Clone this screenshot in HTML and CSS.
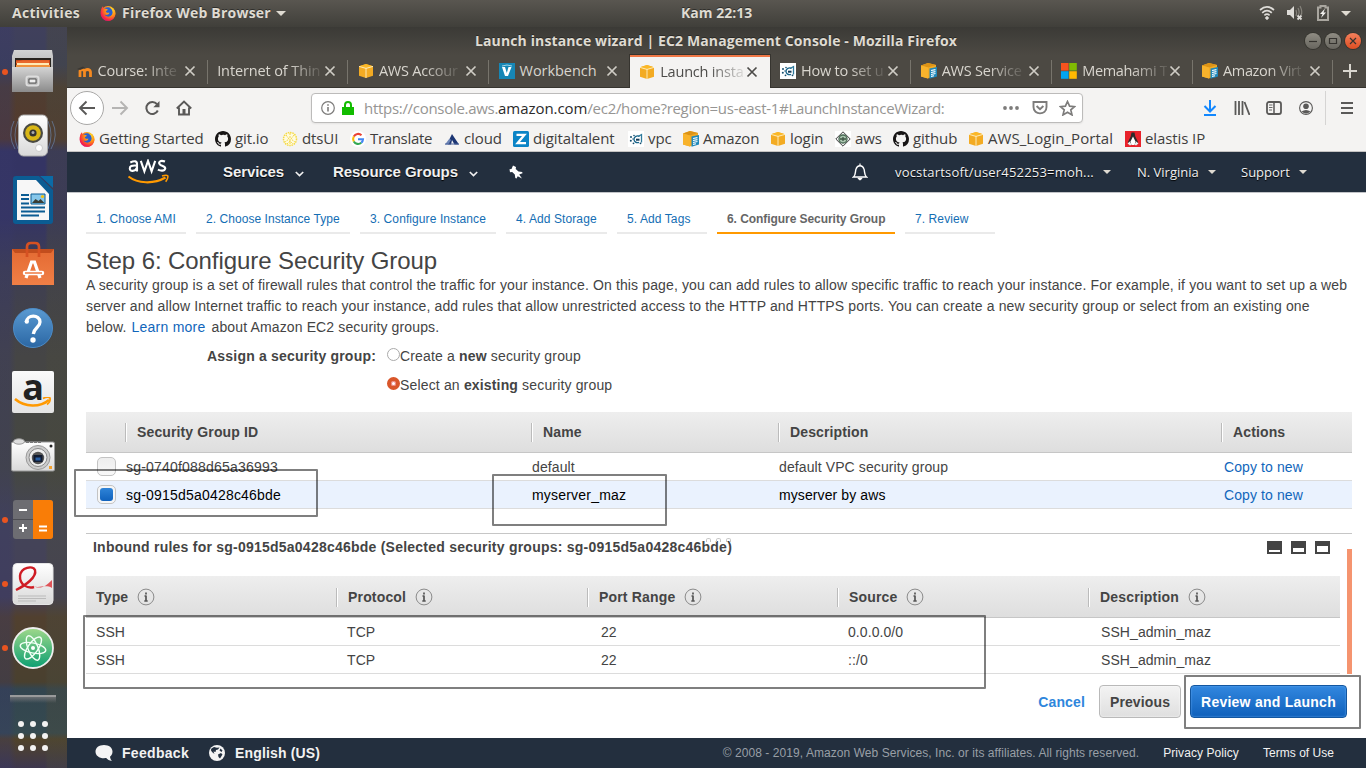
FILE: index.html
```
<!DOCTYPE html>
<html lang="en">
<head>
<meta charset="utf-8">
<title>Launch instance wizard | EC2 Management Console</title>
<link rel="stylesheet" href="styles.css">
</head>
<body>
<svg class="defs" width="0" height="0">
  <defs>
    <radialGradient id="gFox" cx=".7" cy=".25" r=".9"><stop offset="0" stop-color="#ffe226"/><stop offset=".45" stop-color="#ff8a16"/><stop offset=".8" stop-color="#f5224a"/><stop offset="1" stop-color="#d01582"/></radialGradient>
    <linearGradient id="gMetal" x1="0" y1="0" x2="0" y2="1"><stop offset="0" stop-color="#d4d4d4"/><stop offset="1" stop-color="#8b8b8b"/></linearGradient>
    <linearGradient id="gWhite" x1="0" y1="0" x2="0" y2="1"><stop offset="0" stop-color="#fff"/><stop offset="1" stop-color="#d9d9d9"/></linearGradient>
    <linearGradient id="gBag" x1="0" y1="0" x2="0" y2="1"><stop offset="0" stop-color="#e46a32"/><stop offset="1" stop-color="#f07f46"/></linearGradient>
    <linearGradient id="gHelp" x1="0" y1="0" x2="0" y2="1"><stop offset="0" stop-color="#5a9ad2"/><stop offset="1" stop-color="#2b67a4"/></linearGradient>
    <linearGradient id="gAtom" x1="0" y1="0" x2="0" y2="1"><stop offset="0" stop-color="#9fd88a"/><stop offset="1" stop-color="#0c9f72"/></linearGradient>
  </defs>
  <symbol id="fox" viewBox="0 0 16 16"><circle cx="8" cy="8.400" r="7.400" fill="url(#gFox)"/><path d="M3.200 6C4 2.500 6.500 1.800 9 2.300c3 1 4.300 4 3.600 6.700-1.200 3-5.800 4-8.200 1.500z" fill="#2a5fd0"/><path d="M.8 7C.7 4 2 2 3 1.300c0 1 .3 1.700 1 2.200 1-.3 2 0 2.500.5C8 4 8 5 7 5.500c-1 .3-1.500.9-1 1.500.8.900 2.400 1 3.500.7-.8 2-3 2.700-5 1.900 2.300 3.500 8 2.500 8.300-2.100 0-2.500-1.500-4-3-4.700C12.500 1.600 15.600 5 15.400 9 15 13 12 15.800 8 15.800S.9 12 .8 7z" fill="url(#gFox)"/></symbol>
  <symbol id="cube" viewBox="0 0 16 16"><path d="M1 3.200 8 1l7 2.200v9.600L8 15l-7-2.200z" fill="#f3ab23"/><path d="M1 3.200 8 1l7 2.200-7 2z" fill="#fbb827"/><path d="M8 5.200v9.800M1 3.400l7 2 7-2" stroke="#fff0c5" stroke-width=".9" fill="none"/></symbol>
  <symbol id="cubedoc" viewBox="0 0 16 16"><path d="M0 2.500 7 0l8 2v10l-8 3.500-7-2z" fill="#f2aa25"/><path d="M0 2.500 7 0l8 2-8 2.500z" fill="#dc9316"/><path d="M7 4.500v11L0 13.500v-11z" fill="#f8b32c"/><path d="M8.500 5.500 16 4v9.500l-7.500 2.200z" fill="#1e88bb"/><path d="M10 7.500l4.500-.9M10 9.500l4.500-.9M10 11.500l4.500-1M10 13.400l3-.7" stroke="#fff" stroke-width="1.100"/></symbol>
  <symbol id="vpc" viewBox="0 0 16 16"><path d="M0 0h16v16H0z" fill="#fff"/><path d="M11.500 5.500C9 4 6 5.800 6 8.300s2.500 4 5 3" fill="none" stroke="#17648a" stroke-width="1.300"/><path d="M10 5.500 13.500 3.500v8" fill="none" stroke="#2f7a9c" stroke-width="1.300"/><path d="M8 8.700h3.500" stroke="#123a58" stroke-width="2"/><g fill="#174f70"><circle cx="3" cy="6" r="1"/><circle cx="2.800" cy="9.800" r="1"/><circle cx="5" cy="8" r=".7"/><circle cx="5.500" cy="12.300" r=".9"/><circle cx="12.500" cy="12.300" r=".9"/><circle cx="6" cy="4.500" r=".8"/></g></symbol>
  <symbol id="github" viewBox="0 0 16 16"><path fill="#171515" d="M8 0C3.580 0 0 3.580 0 8c0 3.540 2.290 6.530 5.470 7.590.4.070.55-.17.55-.38 0-.19-.01-.82-.01-1.490-2.010.37-2.530-.49-2.690-.94-.09-.23-.48-.94-.82-1.130-.28-.15-.68-.52-.01-.53.63-.01 1.080.58 1.230.82.72 1.210 1.870.87 2.330.66.07-.52.28-.87.51-1.070-1.780-.2-3.640-.89-3.640-3.950 0-.87.31-1.590.82-2.150-.08-.2-.36-1.020.08-2.120 0 0 .67-.21 2.200.82A7.600 7.600 0 0 1 8 3.860c.68 0 1.360.09 2 .27 1.530-1.040 2.200-.82 2.200-.82.44 1.100.16 1.920.08 2.120.51.56.82 1.270.82 2.150 0 3.070-1.870 3.750-3.650 3.950.29.25.54.73.54 1.480 0 1.070-.01 1.930-.01 2.200 0 .21.15.46.55.38A8.010 8.010 0 0 0 16 8c0-4.420-3.580-8-8-8z"/></symbol>
  <symbol id="x" viewBox="0 0 12 12"><path d="M1.500 1.500l9 9M10.500 1.500l-9 9" stroke="currentColor" stroke-width="1.700" fill="none"/></symbol>
  <symbol id="info" viewBox="0 0 18 18"><circle cx="9" cy="9" r="7.900" fill="none" stroke="#8b8b8b" stroke-width="1"/><path d="M9 7.400v6M9 4.500v1.900M7.500 8h1.500M7.300 13h3.400" stroke="#555" stroke-width="1.700"/></symbol>
</svg>

<header class="topbar">
  <span class="activities">Activities</span>
  <svg class="i16"><use href="#fox"/></svg>
  <span class="appname">Firefox Web Browser</span><i class="tri"></i>
  <span class="clock">Kam 22:13</span>
  <div class="tray">
    <svg width="16" height="16" viewBox="0 0 16 16" fill="none" stroke="#dedcd8" stroke-width="1.700"><path d="M1 5c4.500-4 9.500-4 14 0M3.200 7.800c3-2.600 6.600-2.600 9.600 0M5.400 10.300c1.600-1.300 3.600-1.300 5.200 0"/><circle cx="8" cy="13" r="1.300" fill="#dedcd8" stroke-width="1"/></svg>
    <svg width="18" height="16" viewBox="0 0 18 16"><path d="M1 5h3l4-4v13l-4-4H1z" fill="#dedcd8"/><path d="M10 5q1.300 3 0 6M12 3q2.300 4.500 0 8M14 1q3 6 1 9" stroke="#85827b" stroke-width="1.200" fill="none"/><path d="M11.500 10.500l4 4M15.500 10.500l-4 4" stroke="#dedcd8" stroke-width="1.800"/></svg>
    <svg width="12" height="16" viewBox="0 0 12 16"><path d="M1 2.500h2.500V1h5v1.500H11V15H1z" fill="none" stroke="#a9a69f" stroke-width="2"/><path d="M8 3.500 3 9h2.500L4 13l5-5.500H6.500z" fill="#f2f1ee"/></svg>
    <i class="tri"></i>
  </div>
</header>

<div class="desktop">
<aside class="dock">
  <div class="app run"><svg width="44" height="46" viewBox="0 0 44 46"><path d="M3 1h38l1 6v36H1V7z" fill="url(#gMetal)"/><path d="M4 9h36v9H4z" fill="#29241f"/><path d="M5 11h34v8H5z" fill="#c4451b"/><path d="M5 12.500l7-1.200h26v3H5z" fill="#e8672b"/><path d="M6 14h32v2H6z" fill="#ffe9b4"/><path d="M5 16h34v2H5z" fill="#f0923c"/><path d="M1 18h41v25H1z" fill="url(#gMetal)"/><rect x="15.500" y="27.500" width="12" height="9" rx="2" fill="#aaa" stroke="#ddd" stroke-width="2"/><path d="M18 30h7v4h-7z" fill="#eee" stroke="#555"/></svg></div>
  <div class="app"><svg width="50" height="46" viewBox="0 0 50 46"><path d="M6 8q-7 14 1 28M10 8q-6 14 0 28M44 8q7 14-1 28M40 8q6 14 0 28" fill="none" stroke="#6d8cb9" opacity=".6"/><rect x="10.500" y="2" width="29" height="41" rx="5" fill="url(#gWhite)" stroke="#aaa"/><circle cx="25" cy="20" r="10" fill="#4a4a42"/><circle cx="25" cy="20" r="7.800" fill="#d9b716"/><circle cx="25" cy="20" r="3.600" fill="#333"/><circle cx="25" cy="19.500" r="1.500" fill="#aaa"/><circle cx="31" cy="35" r="3.500" fill="#fff" stroke="#ccc"/></svg></div>
  <div class="app"><svg width="42" height="50" viewBox="0 0 42 50"><path d="M4 1h23l14 14v31q0 3-3 3H4q-3 0-3-3V4q0-3 3-3z" fill="#0b5c93"/><path d="M5 5h19l13 14v26H5z" fill="#f7f7f7"/><path d="M28 1h13v12z" fill="#0b6ba6"/><path d="M9 20h8M9 24h8M9 28.500h8M9 32.500h24M9 36.500h24M9 40.500h18" stroke="#0b5c93" stroke-width="1.900"/><path d="M19 19h14v10H19z" fill="#86c7ea" stroke="#0b5c93"/><path d="M20 28l3.500-4 3 2 2-2 4 4z" fill="#3a3d34"/><circle cx="30.500" cy="21.500" r="1.600" fill="#f4c20d"/></svg></div>
  <div class="app"><svg width="44" height="46" viewBox="0 0 44 46"><path d="M1 8h42v36H1z" fill="url(#gBag)"/><path d="M1 8h42l-3 4H4z" fill="#c24d1d"/><path d="M16 16V6q0-4 4-4h4q4 0 4 4v10" fill="none" stroke="#d65122" stroke-width="2.700"/><path d="M15 37l5.500-16h3L29 37" stroke="#fff" stroke-width="3.200" fill="none"/><path d="M14 32h17" stroke="#fff" stroke-width="4.500" stroke-linecap="round"/><path d="M14 32h17" stroke="#ee7a42" stroke-width="1.500"/></svg></div>
  <div class="app"><svg width="42" height="42" viewBox="0 0 42 42"><circle cx="21" cy="21" r="19.500" fill="url(#gHelp)" stroke="#4c8cc8"/><path d="M14.500 15c0-7.500 13.500-8 13.500 0 0 5.500-6 5.500-6.700 12" fill="none" stroke="#fff" stroke-width="3.300"/><circle cx="14.800" cy="14.600" r="2.200" fill="#fff"/><circle cx="21" cy="33" r="2.700" fill="#fff"/></svg></div>
  <div class="app"><div class="amazon"><b>a</b><svg width="38" height="12" viewBox="0 0 38 12"><path d="M1 2c10 8.500 25 8.500 34 1" fill="none" stroke="#ff9900" stroke-width="2.600"/><path d="M29 1.500c3-1.500 6-1.500 7-.5.4 2-1 5-3 6.500" fill="none" stroke="#ff9900" stroke-width="1.700"/></svg></div></div>
  <div class="app"><svg width="46" height="38" viewBox="0 0 46 38"><rect x="1.500" y="5" width="43" height="29" rx="1.500" fill="url(#gWhite)" stroke="#999"/><ellipse cx="9" cy="4.500" rx="5.500" ry="2.700" fill="#ddd" stroke="#999"/><path d="M16 5h16" stroke="#777" stroke-width="2" stroke-dasharray="3 1"/><circle cx="28" cy="20.500" r="12" fill="#ccc" stroke="#999"/><circle cx="28" cy="20.500" r="9" fill="#eee" stroke="#888"/><circle cx="28" cy="21" r="6.200" fill="#555"/><path d="M23.500 18h9v7h-9z" fill="#111b30"/><path d="M25.500 20.500h5v3h-5z" fill="#285fa4"/><path d="M39 29h3v3h-3z" fill="#f3a12d"/><circle cx="41" cy="9" r="1.500" fill="#222"/></svg></div>
  <div class="app run"><svg width="42" height="42" viewBox="0 0 42 42"><rect x="1" y="1" width="40" height="39" rx="3" fill="#6d6d72"/><path d="M21 1h17q3 0 3 3v33q0 3-3 3H21z" fill="#f97d07"/><path d="M1 20.500h20" stroke="#4d4d52"/><path d="M7 11h8M7 29h8M11 25v8M27 27.500h8M27 31.500h8" stroke="#fff" stroke-width="2"/></svg></div>
  <div class="app run"><svg width="42" height="44" viewBox="0 0 42 44"><rect x="1" y="1.500" width="40" height="41" rx="4" fill="url(#gWhite)" stroke="#e5e5e5"/><path d="M4 28C14 23 25 15 23 8c-2-4.500-14-3-15 6-.5 9 8 13 14 11" fill="none" stroke="#cf1c24" stroke-width="2.400"/><path d="M21 24c8 4 13 0 19-6v8c-7-4-13 1-19-2z" fill="#df5358"/><path d="M6 34h28M6 36.500h28M6 39h18" stroke="#bbb"/></svg></div>
  <div class="app run"><svg width="44" height="44" viewBox="0 0 44 44"><circle cx="22" cy="22" r="20" fill="url(#gAtom)" stroke="#eee" stroke-width="1.800"/><g fill="none" stroke="#f2fff6" stroke-width="1.400"><ellipse cx="22" cy="22" rx="13" ry="5" transform="rotate(12 22 22)"/><ellipse cx="22" cy="22" rx="13" ry="5" transform="rotate(68 22 22)"/><ellipse cx="22" cy="22" rx="13" ry="5" transform="rotate(125 22 22)"/></g><circle cx="22" cy="22" r="2" fill="#fff"/></svg></div>
  <div class="ghost"></div>
  <svg class="grid9" width="32" height="32" viewBox="0 0 32 32" fill="#f3f2f1"><circle cx="4" cy="4" r="3"/><circle cx="16" cy="4" r="3"/><circle cx="28" cy="4" r="3"/><circle cx="4" cy="16" r="3"/><circle cx="16" cy="16" r="3"/><circle cx="28" cy="16" r="3"/><circle cx="4" cy="28" r="3"/><circle cx="16" cy="28" r="3"/><circle cx="28" cy="28" r="3"/></svg>
</aside>

<div class="window">
  <div class="titlebar">
    <span>Launch instance wizard | EC2 Management Console - Mozilla Firefox</span>
    <div class="winbtns"><i><svg viewBox="0 0 16 16"><path d="M4 8.500h8" /></svg></i><i><svg viewBox="0 0 16 16"><path d="M4.500 5.500h7v5h-7z"/></svg></i><i class="close"><svg viewBox="0 0 16 16"><path d="M5 5l6 6M11 5l-6 6"/></svg></i></div>
  </div>
  <div class="tabs">
    <div class="tab"><svg class="i16" viewBox="0 0 16 16"><path d="M3 14V8.500q0-2 2-2t2.500 2V14M8 8.500q0-2 2.500-2T13.500 9v5" fill="none" stroke="#f68a20" stroke-width="2.800"/><path d="M0 6l6-2.500 2 1.500-5 2" fill="#3a3733"/></svg><span>Course: Inte</span><svg class="xx"><use href="#x"/></svg></div>
    <div class="tab nofav"><span>Internet of Thin</span><svg class="xx"><use href="#x"/></svg></div>
    <div class="tab"><svg class="i16"><use href="#cube"/></svg><span>AWS Accour</span><svg class="xx"><use href="#x"/></svg></div>
    <div class="tab last"><svg class="i16" viewBox="0 0 16 16"><path d="M0 0h16v16H0z" fill="#1686b5"/><path d="M3 4l3 9h3l3.500-9h-3L7.800 10 6 4z" fill="#fff"/><path d="M3 3q5-2 10 0" stroke="#9fd4e8" fill="none"/></svg><span class="full">Workbench</span><svg class="xx"><use href="#x"/></svg></div>
    <div class="tab active"><svg class="i16"><use href="#cube"/></svg><span>Launch insta</span><svg class="xx"><use href="#x"/></svg></div>
    <div class="tab"><svg class="i16"><use href="#vpc"/></svg><span>How to set u</span><svg class="xx"><use href="#x"/></svg></div>
    <div class="tab"><svg class="i16"><use href="#cubedoc"/></svg><span>AWS Service</span><svg class="xx"><use href="#x"/></svg></div>
    <div class="tab"><svg class="i16" viewBox="0 0 16 16"><path d="M0 0h7.600v7.600H0z" fill="#f7531f"/><path d="M8.200 0h7.600v7.600H8.200z" fill="#80bb03"/><path d="M0 8.200h7.600v7.600H0z" fill="#02a5f0"/><path d="M8.200 8.200h7.600v7.600H8.200z" fill="#ffb901"/></svg><span class="tight">Memahami T</span><svg class="xx"><use href="#x"/></svg></div>
    <div class="tab"><svg class="i16"><use href="#cubedoc"/></svg><span class="tight">Amazon Virt</span><svg class="xx"><use href="#x"/></svg></div>
    <svg class="plus" width="14" height="14" viewBox="0 0 14 14"><path d="M7 0v14M0 7h14" stroke="#d8d5ce" stroke-width="2"/></svg>
  </div>
  <div class="nav">
    <div class="back"><svg width="18" height="16" viewBox="0 0 18 16"><path d="M17 8H2M8.500 1.500 2 8l6.500 6.500" fill="none" stroke="#5a5958" stroke-width="1.900"/></svg></div>
    <svg class="fwd" width="18" height="16" viewBox="0 0 18 16"><path d="M1 8h15M9.500 1.500 16 8l-6.500 6.500" fill="none" stroke="#b5b4b3" stroke-width="1.900"/></svg>
    <svg class="reload" width="16" height="16" viewBox="0 0 16 16"><path d="M13.800 10.500A6 6 0 1 1 13 4.200" fill="none" stroke="#5a5958" stroke-width="2"/><path d="M15.500 1v6.200H9.300z" fill="#5a5958"/></svg>
    <svg class="home" width="16" height="16" viewBox="0 0 16 16"><path d="M.8 8.500 8 1.500l7.200 7M3 7.500V14.500h10V7.500" fill="none" stroke="#5a5958" stroke-width="1.900"/><path d="M6.500 9h3v5.500h-3z" fill="#5a5958"/></svg>
    <div class="urlbar">
      <svg width="14" height="14" viewBox="0 0 14 14"><circle cx="7" cy="7" r="6.300" fill="none" stroke="#7d7c7b" stroke-width="1.200"/><path d="M7 6v4.500M7 3.200v1.600" stroke="#7d7c7b" stroke-width="1.600"/></svg>
      <svg width="12" height="14" viewBox="0 0 12 14"><path d="M0 6h12v8H0z" fill="#12bc00"/><path d="M3 7V4q0-3 3-3t3 3v3" fill="none" stroke="#12bc00" stroke-width="2"/></svg>
      <span class="url">https://console.aws.<b>amazon.com</b>/ec2/home?region=us-east-1#LaunchInstanceWizard:</span>
      <svg class="dots" width="16" height="4" viewBox="0 0 16 4" fill="#7d7c7b"><circle cx="2" cy="2" r="1.900"/><circle cx="8" cy="2" r="1.900"/><circle cx="14" cy="2" r="1.900"/></svg>
      <svg width="16" height="16" viewBox="0 0 16 16" fill="none" stroke="#7d7c7b" stroke-width="1.900"><path d="M1.500 2h13v5c0 8.500-13 8.500-13 0z"/><path d="M4.600 6 8 9.300 11.400 6"/></svg>
      <svg class="star" width="17" height="16" viewBox="0 0 17 16"><path d="M8.500 1.500l2.100 4.600 5 .5-3.800 3.300 1.200 5-4.500-2.700L4 14.900l1.200-5L1.400 6.600l5-.5z" fill="none" stroke="#7d7c7b" stroke-width="1.700"/></svg>
    </div>
    <div class="navright">
      <svg width="14" height="16" viewBox="0 0 14 16"><path d="M7 0v11M1.500 6 7 11.500 12.500 6M1 15h12" fill="none" stroke="#1287fe" stroke-width="2"/></svg>
      <svg width="16" height="14" viewBox="0 0 16 14"><path d="M1.500 0v14M5 0v14M8.500 0v14M10.500 1 15.500 14" fill="none" stroke="#5a5958" stroke-width="1.800"/></svg>
      <svg width="16" height="14" viewBox="0 0 16 14"><rect x="1" y="1" width="14" height="12" rx="2" fill="none" stroke="#5a5958" stroke-width="1.800"/><path d="M8 1v12" stroke="#5a5958" stroke-width="1.500"/><path d="M3 4h3.500M3 6.500h3.500M3 9h3" stroke="#5a5958" stroke-width=".9"/></svg>
      <svg width="14" height="14" viewBox="0 0 14 14"><circle cx="7" cy="7" r="6.400" fill="none" stroke="#5a5958" stroke-width="1.100"/><circle cx="7" cy="5.200" r="2.800" fill="#5a5958"/><path d="M2.500 10.500q4.500-3 9 0-4.500 4-9 0z" fill="#5a5958"/></svg>
      <i class="sep"></i>
      <svg width="12" height="12" viewBox="0 0 12 12"><path d="M0 1h12M0 6h12M0 11h12" stroke="#5a5958" stroke-width="2"/></svg>
    </div>
  </div>
  <div class="bookmarks">
    <span><svg class="i16"><use href="#fox"/></svg>Getting Started</span>
    <span><svg class="i16"><use href="#github"/></svg>git.io</span>
    <span><svg class="i16" viewBox="0 0 16 16"><circle cx="8" cy="8" r="6.500" fill="#fffbe0" stroke="#f5da42" stroke-width="1.500" stroke-dasharray="1.500 .8"/><path d="M8 2v12M4 4l3 4-4 3M12 4 9 8l4 3M5 13l3-3 3 3" fill="none" stroke="#f3d648" stroke-dasharray="2 1"/></svg>dtsUI</span>
    <span><svg class="i16" viewBox="0 0 16 16"><circle cx="8" cy="8" r="8" fill="#fff"/><g fill="none" stroke-width="2.100"><path d="M11.500 4.200A5 5 0 0 0 3.800 5.500" stroke="#ea4335"/><path d="M3.800 5.500a5 5 0 0 0 0 5" stroke="#fbbc05"/><path d="M3.800 10.500a5 5 0 0 0 7.500 1.300" stroke="#34a853"/><path d="M11.300 11.800A5 5 0 0 0 13 8.300H8" stroke="#4285f4"/></g></svg><em class="tr8">Translate</em></span>
    <span><svg class="i16" viewBox="0 0 16 16"><path d="M8 3l7 10.500h-4.500L8 9l-1 4.500H4L6 7z" fill="#1b3573"/><path d="M5.500 7.500 7 9l-2.500 4.500H1z" fill="#6c84b5"/><path d="M1 12.500h14v1H1z" fill="#4a629a"/></svg>cloud</span>
    <span><svg class="i16" viewBox="0 0 16 16"><rect width="16" height="16" rx="1.500" fill="#0b84c6"/><path d="M3.500 3.800h8L4.500 12.200h8.500" fill="none" stroke="#fff" stroke-width="2.200"/></svg>digitaltalent</span>
    <span><svg class="i16"><use href="#vpc"/></svg>vpc</span>
    <span><svg class="i16"><use href="#cubedoc"/></svg>Amazon</span>
    <span><svg class="i16"><use href="#cube"/></svg>login</span>
    <span><svg class="i16" viewBox="0 0 16 16"><path d="M0 0h16v16H0z" fill="#fff"/><path d="M8 .8 15.200 8 8 15.200.8 8z" fill="#eee" stroke="#444"/><path d="M8 4c2.500 0 4 2 4 4s-1.500 4-4 4-4-2-4-4 1.500-4 4-4z" fill="#a9c4ae" stroke="#4a6b55" stroke-width="1.300"/><path d="M5 8h6M8 6v4" stroke="#3f5546" stroke-width="1.300"/></svg>aws</span>
    <span><svg class="i16"><use href="#github"/></svg>github</span>
    <span><svg class="i16"><use href="#cube"/></svg><em class="portal">AWS_Login_Portal</em></span>
    <span><svg class="i16" viewBox="0 0 16 16"><path d="M0 0h16v16H0z" fill="#e8222b"/><path d="M6.500 1.500h3l.8 4L13 11l-1 3H4l-1-3 2.700-5.500z" fill="#2b2b2b"/><path d="M8 5.500l2.500 5-1 3.500h-3l-1-3.500z" fill="#fff"/><path d="M2.500 12.500l2.300-2 1.700 3-1.500 1zM13.500 12.500l-2.300-2-1.700 3 1.500 1z" fill="#eee"/></svg>elastis IP</span>
  </div>

  <div class="awsbar">
    <svg class="awslogo" width="42" height="26" viewBox="0 0 42 26"><g fill="none" stroke="#fff" stroke-width="2.100"><path d="M3.300 3.500Q10 .5 10 5v7.500M10 6.600C4.500 5.900 2.800 7.400 2.800 9.400c0 3.500 5.500 3.300 7-.5M13.800 1.800l3.600 10.500 3.600-10.300 3.600 10.300 3.600-10.500M38 2.600c-6-2.200-7.500 2-4 3.700 3 1.200 4.700 1.500 4.200 3.500-.7 2.600-5 2-7.300.8"/></g><path d="M1.500 17.500c9 7 25 8 37 1" fill="none" stroke="#f90" stroke-width="2.200"/><path d="M35 17c3-1 5-1 5.700-.3.600 1.500-.5 4-2 6" fill="none" stroke="#f90" stroke-width="1.600"/></svg>
    <b class="svc">Services</b><svg class="chev" width="9" height="6" viewBox="0 0 9 6"><path d="M.8 1l3.700 3.500L8.200 1" /></svg>
    <b class="rg">Resource Groups</b><svg class="chev" width="9" height="6" viewBox="0 0 9 6"><path d="M.8 1l3.700 3.500L8.200 1" /></svg>
    <svg class="pin" width="14" height="14" viewBox="0 0 14 14"><path d="M4 .5 7 2l-.3 2 2.800 2.500 3.700.5.300 1.200-3.300 1.300L13 13.500 8.700 11.300 7.500 13.500 6.300 13l-.5-3.500L3.200 7 1 7.200.5 4.200 2.500 4z" fill="#fff"/></svg>
    <svg class="bell" width="16" height="18" viewBox="0 0 16 18"><path d="M1.500 14c2.500-2 1.500-5 2.500-8 .7-2.300 2-3.300 4-3.300s3.300 1 4 3.300c1 3 0 6 2.500 8z" fill="none" stroke="#fff" stroke-width="1.400"/><path d="M8 .5v2M6.300 15.300h3.400q-1.700 3-3.400 0z" stroke="#fff" stroke-width="1.200" fill="#fff"/></svg>
    <span class="user">vocstartsoft/user452253=moh...</span><i class="tri"></i>
    <span class="region">N. Virginia</span><i class="tri"></i>
    <span class="support">Support</span><i class="tri"></i>
  </div>

  <main class="console">
    <nav class="steps">
      <a>1. Choose AMI</a><a>2. Choose Instance Type</a><a>3. Configure Instance</a><a>4. Add Storage</a><a>5. Add Tags</a><a class="on">6. Configure Security Group</a><a>7. Review</a>
    </nav>
    <h1>Step 6: Configure Security Group</h1>
    <p class="intro">A security group is a set of firewall rules that control the traffic for your instance. On this page, you can add rules to allow specific traffic to reach your instance. For example, if you want to set up a web<br><span>server and allow Internet traffic to reach your instance, add rules that allow unrestricted access to the HTTP and HTTPS ports. You can create a new security group or select from an existing one</span><br>below. <a>Learn more</a> about Amazon EC2 security groups.</p>
    <div class="assign">
      <b class="lbl">Assign a security group:</b>
      <div class="opts">
        <label><i class="radio"></i>Create a <b>new</b> security group</label>
        <label><i class="radio sel"></i>Select an <b>existing</b> security group</label>
      </div>
    </div>

    <section class="groups">
      <div class="hd"><span></span><span>Security Group ID</span><span>Name</span><span>Description</span><span>Actions</span></div>
      <div class="tr"><span><i class="check"></i></span><span class="id">sg-0740f088d65a36993</span><span>default</span><span>default VPC security group</span><a>Copy to new</a></div>
      <div class="tr picked"><span><i class="check ticked"></i></span><span class="id">sg-0915d5a0428c46bde</span><span class="nm">myserver_maz</span><span>myserver by aws</span><a>Copy to new</a></div>
    </section>

    <section class="rules">
      <div class="ruleshead">
        <b>Inbound rules for sg-0915d5a0428c46bde (Selected security groups: sg-0915d5a0428c46bde)</b>
        <div class="panes"><i class="p1"></i><i class="p2"></i><i class="p3"></i></div>
        <div class="grip"><i></i><i></i><i></i></div>
      </div>
      <div class="rulesbody">
        <div class="rtable">
          <div class="hd"><span>Type<svg><use href="#info"/></svg></span><span>Protocol<svg><use href="#info"/></svg></span><span>Port Range<svg><use href="#info"/></svg></span><span>Source<svg><use href="#info"/></svg></span><span>Description<svg><use href="#info"/></svg></span></div>
          <div class="tr"><span>SSH</span><span>TCP</span><span>22</span><span>0.0.0.0/0</span><span>SSH_admin_maz</span></div>
          <div class="tr"><span>SSH</span><span>TCP</span><span>22</span><span>::/0</span><span>SSH_admin_maz</span></div>
        </div>
      </div>
    </section>

    <div class="actions"><b class="cancel">Cancel</b><button class="prev">Previous</button><button class="launch">Review and Launch</button></div>
  </main>

  <footer class="foot">
    <svg width="18" height="17" viewBox="0 0 18 17"><path d="M9 0c5 0 8.500 2.800 8.500 6.500 0 2.500-1 4-2.500 5.200.3 2 1 3 1.800 4.300-2.500-.3-4.300-1.400-5.600-2.900C5 14 .5 11 .5 6.500.5 2.800 4 0 9 0z" fill="#f4f4f4"/></svg>
    <b class="fb">Feedback</b>
    <svg class="globe" width="16" height="16" viewBox="0 0 16 16"><circle cx="8" cy="8" r="8" fill="#f4f4f4"/><path d="M2.500 3.500 5 2l3 .8 2.500-.3-1.500 2-2 .5-.5 2-2-.5L5.500 9 3 7 1.800 5zM9 9.500l3-1.500 1.500 1.500-2.500 4-1.500-1.500zM11.500 3.500l2 2-1 1.500-2-1.500z" fill="#222f3f"/></svg>
    <b class="lang">English (US)</b>
    <span class="copy">© 2008 - 2019, Amazon Web Services, Inc. or its affiliates. All rights reserved.</span>
    <span class="pp">Privacy Policy</span><span class="tou">Terms of Use</span>
  </footer>
</div>
</div>

<div class="mark m1"></div><div class="mark m2"></div><div class="mark m3"></div><div class="mark m4"></div>
</body>
</html>
```
FILE: styles.css
```
* { box-sizing: border-box; }
body { margin: 0; width: 1366px; height: 768px; overflow: hidden; position: relative; font-family: "Liberation Sans", Arial, sans-serif; color: #444; display: flex; flex-direction: column; }
svg { flex: none; display: block; }
i { flex: none; display: block; }
em { font-style: normal; }
.defs { position: absolute; }
.i16 { width: 16px; height: 16px; }

/* shell bar */
.topbar { height: 27px; flex: none; display: flex; align-items: center; background: linear-gradient(#595650, #403f3a); color: #dfdbd2; font: bold 14px/26px "Open Sans", "Noto Sans", sans-serif; padding: 0 0 1px 12px; text-shadow: 0 -1px #2f2e2b; }
.activities { width: 88px; letter-spacing: .3px; }
.appname { margin-left: 6px; width: 149px; letter-spacing: .22px; white-space: nowrap; }
.tri { border: 5px solid transparent; border-top-color: #dfdbd2; border-bottom: 0; }
.topbar .appname + .tri { margin-left: 5px; }
.clock { margin-left: 395px; width: 72px; white-space: nowrap; }
.tray { display: flex; align-items: center; margin-left: auto; padding-right: 15px; }
.tray svg:nth-child(2) { margin-left: 11px; }
.tray svg:nth-child(3) { margin-left: 13px; }
.tray .tri { margin-left: 12px; }

.desktop { display: flex; flex: 1; min-height: 0; }

/* launcher */
.dock { width: 67px; flex: none; display: flex; flex-direction: column; align-items: center; padding: 13px 1px 0 0; position: relative;
  background: linear-gradient(90deg, #38386a55 0 9px, transparent 16px 45px, #4a4a3d60 48px), linear-gradient(#40405c 0, #3c405a 38px, #4f3e32 60px, #54392c 112px, #343463 124px, #343464 190px, #3e3e52 240px, #454545 330px, #454741 440px, #444458 500px, #444058 570px, #51402f 590px, #49402f 655px, #33454f 662px, #354a50 706px, #51432a 712px, #3d374e); }
.app { height: 64px; width: 66px; flex: none; display: flex; align-items: center; justify-content: center; position: relative; }
.run::before { content: ""; position: absolute; left: 2px; top: 29px; width: 6px; height: 6px; border-radius: 50%; background: #e95420; }
.amazon { width: 42px; height: 42px; border-radius: 2px; background: linear-gradient(#fafafa, #e3e3e3); display: flex; flex-direction: column; align-items: center; }
.amazon b { font: bold 36px/40px "Open Sans", sans-serif; height: 26px; margin-top: -4px; color: #222; }
.amazon svg { margin-top: 4px; }
.ghost { width: 46px; height: 8px; margin-top: 15px; background: linear-gradient(#77787bcc, #77787b00); border-top: 2px solid #999a9b; }
.grid9 { margin-top: 17px; }

/* window frame */
.window { flex: 1; min-width: 0; display: flex; flex-direction: column; background: #fff; }
.titlebar { height: 28px; flex: none; background: linear-gradient(#3b3a36, #4c4943); position: relative; color: #dfdbd2; font: bold 14px/28px "Open Sans", "Noto Sans", sans-serif; letter-spacing: .127px; padding-left: 408px; white-space: nowrap; text-shadow: 0 -1px #2a2926; display: flex; align-items: center; }
.winbtns { display: flex; gap: 4px; margin-left: auto; padding-right: 5px; }
.winbtns i { width: 16px; height: 16px; border-radius: 50%; background: linear-gradient(#8f8c83, #68665f); box-shadow: 0 0 0 1px #36352f; }
.winbtns .close { background: linear-gradient(#f4805c, #dd4e22); }
.winbtns path { fill: none; stroke: #35332f; stroke-width: 1.200; }

.tabs { height: 33px; flex: none; background: #4c4943; display: flex; color: #d8d5ce; font: 14.500px/32px "Open Sans", "Noto Sans", sans-serif; border-bottom: 1px solid #36342f; }
.tab { width: 140.700px; flex: none; padding: 0 12px 0 9.500px; display: flex; align-items: center; position: relative; letter-spacing: -.2px; }
.tab::after { content: ""; position: absolute; right: 0; top: 5px; height: 24px; width: 1px; background: #77746c; }
.tab span { margin-left: 5px; white-space: nowrap; -webkit-mask-image: linear-gradient(90deg, #000 58%, #0002); mask-image: linear-gradient(90deg, #000 58%, #0002); }
.tab span.tight { letter-spacing: -.35px; }
.tab span.full { -webkit-mask-image: none; mask-image: none; letter-spacing: -.05px; }
.tab.nofav span { margin-left: 0; letter-spacing: -.12px; -webkit-mask-image: linear-gradient(90deg, #000 70%, #0002); mask-image: linear-gradient(90deg, #000 70%, #0002); }
.tab .xx { width: 12px; height: 12px; margin-left: auto; color: #cfccc5; }
.tab.active { background: #f4f3f2; color: #4c4b49; border-top: 2px solid #f07746; height: 33px; padding-bottom: 2px; box-shadow: 0 0 0 1px #36342f; clip-path: inset(-1px -1px 0 -1px); }
.tab.active .xx { color: #4c4b49; }
.tab.active::after, .tab.last::after { display: none; }
.plus { margin: 9px 0 0 10px; }

.nav { height: 40px; flex: none; background: #f4f3f2; display: flex; align-items: center; padding-left: 3px; }
.back { width: 34px; height: 34px; border-radius: 50%; border: 1px solid #a9a8a7; background: #fff; display: flex; align-items: center; justify-content: center; }
.fwd { margin-left: 7px; }
.reload { margin-left: 15px; }
.home { margin-left: 16px; }
.urlbar { margin-left: 119px; width: 772px; height: 30px; border: 1px solid #bcbbba; border-radius: 4px; background: #fff; box-shadow: 0 1px 2px #0001; display: flex; align-items: center; padding: 0 6px 0 9px; }
.urlbar svg + svg { margin-left: 7px; }
.url { margin-left: 10px; width: 639px; font: 15px/28px "Open Sans", "Noto Sans", sans-serif; letter-spacing: -.295px; color: #969593; white-space: nowrap; }
.url b { font-weight: 400; color: #2b2b2b; letter-spacing: -.05px; }
.urlbar .dots + svg { margin-left: 13px; }
.urlbar .star { margin-left: 11px; }
.navright { margin-left: auto; display: flex; align-items: center; padding-right: 13px; height: 40px; }
.navright svg:nth-child(2) { margin-left: 17px; }
.navright svg:nth-child(3) { margin-left: 16px; }
.navright svg:nth-child(4) { margin-left: 17px; }
.sep { width: 1px; height: 34px; background: #d5d4d3; margin: 0 15px 0 12px; }

.bookmarks { height: 24px; flex: none; background: #f4f3f2; border-bottom: 1px solid #c4c3c2; display: grid; grid-template-columns: 136px 67px 68px 94px 69px 115px 55px 87px 65px 58px 75px 157px 100px; padding: 0 0 2px 12px; font: 15px/21px "Open Sans", "Noto Sans", sans-serif; letter-spacing: -.1px; color: #3f3e3d; }
.bookmarks span { display: flex; align-items: center; gap: 4px; white-space: nowrap; }
.tr8 { letter-spacing: -.33px; }
.portal { letter-spacing: .04px; }

/* service header */
.awsbar { height: 41px; flex: none; background: #232f3e; border-bottom: 1px solid #c2c4c8; display: flex; align-items: center; color: #f0f0f0; font: 13px/42px "Open Sans", "Noto Sans", sans-serif; white-space: nowrap; text-shadow: 0 1px 1px #000; padding-left: 60px; }
.awslogo { margin-top: 0; }
.awsbar b { font: bold 15px/40px "Liberation Sans", Arial, sans-serif; }
.svc { margin-left: 54px; width: 61px; letter-spacing: -.09px; }
.rg { margin-left: 29px; width: 125px; letter-spacing: -.06px; }
.chev { margin: 3px 0 0 11px; }
.chev path { fill: none; stroke: #f0f0f0; stroke-width: 1.700; }
.pin { margin-left: 31px; }
.bell { margin-left: 329px; }
.user { margin-left: 27px; width: 199px; letter-spacing: .19px; }
.awsbar .tri { border-width: 4px; border-bottom: 0; margin-left: 9px; }
.region { margin-left: 26px; width: 62px; }
.support { margin-left: 25px; width: 49px; }

/* wizard */
.console { flex: 1; min-height: 0; padding: 0 14px 0 19px; font-size: 14px; letter-spacing: .12px; display: flex; flex-direction: column; }
.steps { display: flex; gap: 10px; padding-top: 11px; height: 41px; flex: none; font-size: 12px; letter-spacing: .09px; }
.steps a { height: 30px; line-height: 30px; padding: 0 10px; border-bottom: 2px solid #eaeaea; white-space: nowrap; width: 100px; }
.steps a:nth-child(2) { width: 154px; letter-spacing: .05px; }
.steps a:nth-child(3) { width: 136px; }
.steps a:nth-child(4) { width: 101px; }
.steps a:nth-child(5) { width: 90px; }
.steps a:nth-child(6) { width: 178px; }
.steps a:nth-child(7) { width: 90px; }
.console .steps a { color: #146eb4; }
.console .steps .on { font-weight: bold; color: #666; border-color: #f90; letter-spacing: -.06px; }
h1 { margin: 11px 0 0; height: 30px; flex: none; font-weight: 400; font-size: 24px; line-height: 32px; letter-spacing: -.08px; color: #444; }
.intro { margin: 0; flex: none; line-height: 21px; letter-spacing: .131px; white-space: nowrap; }
.intro span { letter-spacing: .137px; }
.intro a { margin: 0 2px 0 1px; letter-spacing: .24px; }
.console a { color: #1166bb; }
.assign { display: flex; padding-top: 8px; height: 74px; flex: none; }
.lbl { width: 290px; text-align: right; line-height: 21px; letter-spacing: .2px; margin-right: 11px; }
.opts { display: flex; flex-direction: column; gap: 8px; line-height: 21px; letter-spacing: .16px; }
.opts label { display: flex; align-items: center; white-space: pre; }
.radio { width: 13px; height: 13px; border-radius: 50%; border: 1px solid #aaa; background: #fff; margin: -4px 0 0 0; }
.radio.sel { border: 4px solid #d9562a; box-shadow: inset 0 0 0 1px #e88; }

.hd { background: linear-gradient(#eee, #dedede); border-bottom: 1px solid #c6c6c6; font-weight: bold; letter-spacing: .13px; display: grid; align-items: center; }
.hd span { height: 19px; line-height: 19px; padding-left: 10px; border-left: 1px solid #bbb; box-shadow: inset 1px 0 #fff; display: flex; align-items: center; }
.hd span:first-child { border: 0; box-shadow: none; }
.hd svg { width: 18px; height: 18px; margin-left: 9px; }
.tr { display: grid; height: 28px; line-height: 28px; border-bottom: 1px solid #dcdcdc; white-space: nowrap; }
.groups { width: 1266px; height: 121px; flex: none; }
.groups .hd { height: 41px; grid-template-columns: 39px 406px 247px 443px 131px; }
.groups .hd span { padding-left: 11px; }
.groups .tr { grid-template-columns: 40px 406px 247px 445px 128px; letter-spacing: .1px; }
.groups .tr .id, .groups .tr .nm { letter-spacing: .2px; }
.groups .picked { background: #eaf2fe; color: #000; }
.check { width: 19px; height: 19px; margin: 4px 0 0 11px; border: 1px solid #c3c3c3; border-radius: 5px; background: linear-gradient(#eee, #f8f8f8); }
.ticked { padding: 2px; background: #f6f6f6; }
.ticked::before { content: ""; display: block; width: 13px; height: 13px; border-radius: 3px; background: linear-gradient(#2f84d8, #1062bd); }

.rules { width: 1266px; height: 142px; flex: none; border-top: 1px solid #c6c6c6; }
.ruleshead { height: 42px; position: relative; padding: 4px 22px 0 7px; display: flex; justify-content: space-between; line-height: 19px; letter-spacing: .235px; }
.panes { display: flex; gap: 9px; padding-top: 3px; }
.panes i { width: 15px; height: 13px; border: 2px solid #444; }
.panes .p1 { border-top-width: 9px; }
.panes .p2 { border-top-width: 7px; }
.panes .p3 { border-top-width: 5px; }
.grip { position: absolute; left: 620px; top: 4px; display: flex; gap: 5px; }
.grip i { width: 5px; height: 4px; border: 1px solid #c4c4c4; border-radius: 50% 50% 0 0; border-bottom: 0; }
.rulesbody { position: relative; }
.rulesbody::after { content: ""; position: absolute; right: 0; top: -27px; width: 5px; height: 125px; background: #f5946f; }
.rtable { width: 1254px; }
.rtable .hd { height: 42px; grid-template-columns: 250px 251px 250px 251px 1fr; padding-top: 1px; }
.rtable .hd span { padding-left: 11px; letter-spacing: .17px; }
.rtable .hd span:first-child { padding-left: 10px; }
.rtable .tr { grid-template-columns: 251px 254px 247px 253px 1fr; padding-left: 10px; letter-spacing: .08px; }

.actions { display: flex; align-items: center; justify-content: flex-end; height: 33px; margin-top: 10px; padding-right: 5px; font-size: 14px; }
.cancel { color: #2e86dc; margin-right: 14px; letter-spacing: .15px; }
.actions button { height: 33px; border: 1px solid #b9b9b9; border-radius: 4px; font: bold 14px "Liberation Sans", Arial, sans-serif; padding: 0; color: #444; background: linear-gradient(#f3f3f3, #dfdfdf); box-shadow: inset 0 0 2px #fff; letter-spacing: .12px; }
.actions .prev { width: 82px; }
.actions .launch { width: 157px; margin-left: 9px; color: #fff; border-color: #1256a0; background: linear-gradient(#3287df, #0f60bb); box-shadow: inset 0 0 2px #6ab0f5; letter-spacing: .25px; }

.foot { height: 30px; flex: none; background: #232f3e; color: #f2f2f2; display: flex; align-items: center; padding-left: 28px; font-size: 14px; white-space: nowrap; }
.fb { margin-left: 9px; width: 67px; letter-spacing: .3px; }
.globe { margin-left: 20px; }
.lang { margin-left: 10px; letter-spacing: .15px; }
.copy { margin-left: auto; font-size: 12px; letter-spacing: .065px; color: #999fa6; }
.pp, .tou { font-size: 12px; margin-left: 24px; letter-spacing: .08px; }
.tou { margin-right: 32px; letter-spacing: .03px; }

/* highlight frames drawn over the page */
.mark { position: absolute; border: 2px solid #00000080; border-radius: 1px; }
.m1 { left: 74px; top: 469px; width: 244px; height: 48px; }
.m2 { left: 492px; top: 474px; width: 175px; height: 52px; }
.m3 { left: 83px; top: 615px; width: 903px; height: 74px; }
.m4 { left: 1184px; top: 675px; width: 177px; height: 54px; }
```
